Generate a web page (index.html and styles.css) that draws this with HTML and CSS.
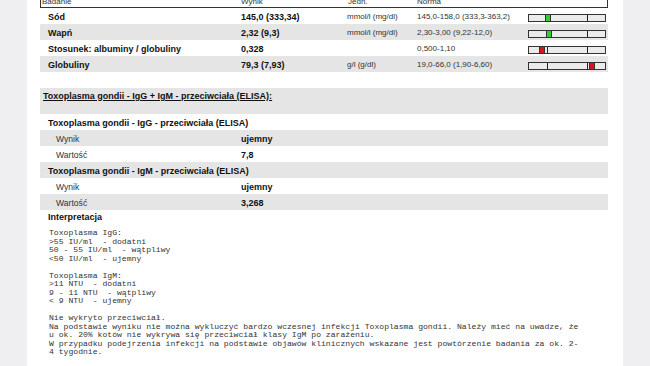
FILE: index.html
```html
<!DOCTYPE html>
<html lang="pl">
<head>
<meta charset="utf-8">
<link rel="stylesheet" href="styles.css">
</head>
<body>
<div class="page">
  <div class="thead">
    <span>Badanie</span><span>Wynik</span><span>Jedn.</span><span>Norma</span><span></span>
  </div>
  <div class="row">
    <span class="name">Sód</span><span class="val">145,0 (333,34)</span><span class="unit">mmol/l (mg/dl)</span><span class="norm">145,0-158,0 (333,3-363,2)</span>
    <div class="bar"><i class="tick t1"></i><i class="tick t2"></i><b class="mark ok" style="left:16px"></b></div>
  </div>
  <div class="row alt">
    <span class="name">Wapń</span><span class="val">2,32 (9,3)</span><span class="unit">mmol/l (mg/dl)</span><span class="norm">2,30-3,00 (9,22-12,0)</span>
    <div class="bar"><i class="tick t1"></i><i class="tick t2"></i><b class="mark ok" style="left:17px"></b></div>
  </div>
  <div class="row">
    <span class="name">Stosunek: albuminy / globuliny</span><span class="val">0,328</span><span class="unit"></span><span class="norm">0,500-1,10</span>
    <div class="bar"><i class="tick t1"></i><i class="tick t2"></i><b class="mark bad" style="left:10px"></b></div>
  </div>
  <div class="row alt">
    <span class="name">Globuliny</span><span class="val">79,3 (7,93)</span><span class="unit">g/l (g/dl)</span><span class="norm">19,0-66,0 (1,90-6,60)</span>
    <div class="bar"><i class="tick t1"></i><i class="tick t2"></i><b class="mark bad" style="left:60px"></b></div>
  </div>

  <div class="section-title"><u>Toxoplasma gondii - IgG + IgM - przeciwciała (ELISA):</u></div>
  <div class="srow head"><span>Toxoplasma gondii - IgG - przeciwciała (ELISA)</span></div>
  <div class="srow alt"><span class="lbl">Wynik</span><span class="sval">ujemny</span></div>
  <div class="srow"><span class="lbl">Wartość</span><span class="sval">7,8</span></div>
  <div class="srow head alt"><span>Toxoplasma gondii - IgM - przeciwciała (ELISA)</span></div>
  <div class="srow"><span class="lbl">Wynik</span><span class="sval">ujemny</span></div>
  <div class="srow alt"><span class="lbl">Wartość</span><span class="sval">3,268</span></div>

  <div class="interp-title">Interpretacja</div>
<pre class="interp">Toxoplasma IgG:
&gt;55 IU/ml  - dodatni
50 - 55 IU/ml  - wątpliwy
&lt;50 IU/ml  - ujemny

Toxoplasma IgM:
&gt;11 NTU  - dodatni
9 - 11 NTU  - wątpliwy
&lt; 9 NTU  - ujemny

Nie wykryto przeciwciał.
Na podstawie wyniku nie można wykluczyć bardzo wczesnej infekcji Toxoplasma gondii. Należy mieć na uwadze, że
u ok. 20% kotów nie wykrywa się przeciwciał klasy IgM po zarażeniu.
W przypadku podejrzenia infekcji na podstawie objawów klinicznych wskazane jest powtórzenie badania za ok. 2-
4 tygodnie.</pre>
</div>
</body>
</html>
```
FILE: styles.css
```css
html, body {
  margin: 0;
  padding: 0;
  background: #efeff1;
  overflow: hidden;
}
body {
  height: 366px;
  font-family: "Liberation Sans", Arial, sans-serif;
  color: #111;
}
.page {
  margin: 0 27px;
  height: 400px;
  background: #fff;
  padding: 0 15px 0 13px;
}
.thead {
  margin-top: -7px;
  height: 15px;
  box-sizing: border-box;
  border: 1px solid #333;
  display: grid;
  grid-template-columns: 199px 107px 69px 111px 78px;
  padding-left: 1px;
  font-size: 8px;
  line-height: 11px;
  padding-top: 2px;
  color: #333;
}
.row {
  height: 16px;
  display: grid;
  grid-template-columns: 193px 106px 70px 111px 78px;
  padding-left: 8px;
  align-items: center;
}
.row > span {
  padding-top: 1px;
  line-height: 12px;
  white-space: nowrap;
}
.alt { background: #e5e5e5; }
.name, .val {
  font-size: 9px;
  font-weight: bold;
}
.unit, .norm {
  font-size: 8px;
  color: #333;
}
.bar {
  position: relative;
  align-self: start;
  margin-top: 6px;
  width: 78px;
  height: 8px;
  box-sizing: border-box;
  border: 1px solid #333;
  background: #ebebeb;
}
.tick {
  position: absolute;
  top: 0;
  bottom: 0;
  width: 1px;
  background: #222;
}
.t1 { left: 18px; }
.t2 { left: 58px; }
.mark {
  position: absolute;
  top: -1px;
  bottom: -1px;
  width: 6px;
  box-sizing: border-box;
  border: 1px solid #333;
}
.ok { background: #2fd12f; }
.bad { background: #d9141b; }

.section-title {
  margin-top: 16px;
  height: 26px;
  box-sizing: border-box;
  background: #e5e5e5;
  padding: 3px 0 0 3px;
  font-size: 9px;
  font-weight: bold;
  line-height: 11px;
}
.srow {
  height: 16px;
  display: grid;
  grid-template-columns: 201px 1fr;
  align-items: center;
  font-size: 9px;
  line-height: 12px;
}
.srow > span { padding-top: 1px; }
.srow.head {
  grid-template-columns: 1fr;
  padding-left: 8px;
  font-weight: bold;
}
.lbl {
  padding-left: 16px;
  font-size: 8.6px;
  color: #333;
}
.sval { font-weight: bold; }

.interp-title {
  height: 14px;
  box-sizing: border-box;
  padding: 1px 0 0 8px;
  font-size: 9px;
  line-height: 12px;
  font-weight: bold;
}
.interp {
  margin: 5px 0 0 9px;
  font-family: "Liberation Mono", "Courier New", monospace;
  font-size: 8.1px;
  line-height: 8.5px;
  color: #333;
}
```
